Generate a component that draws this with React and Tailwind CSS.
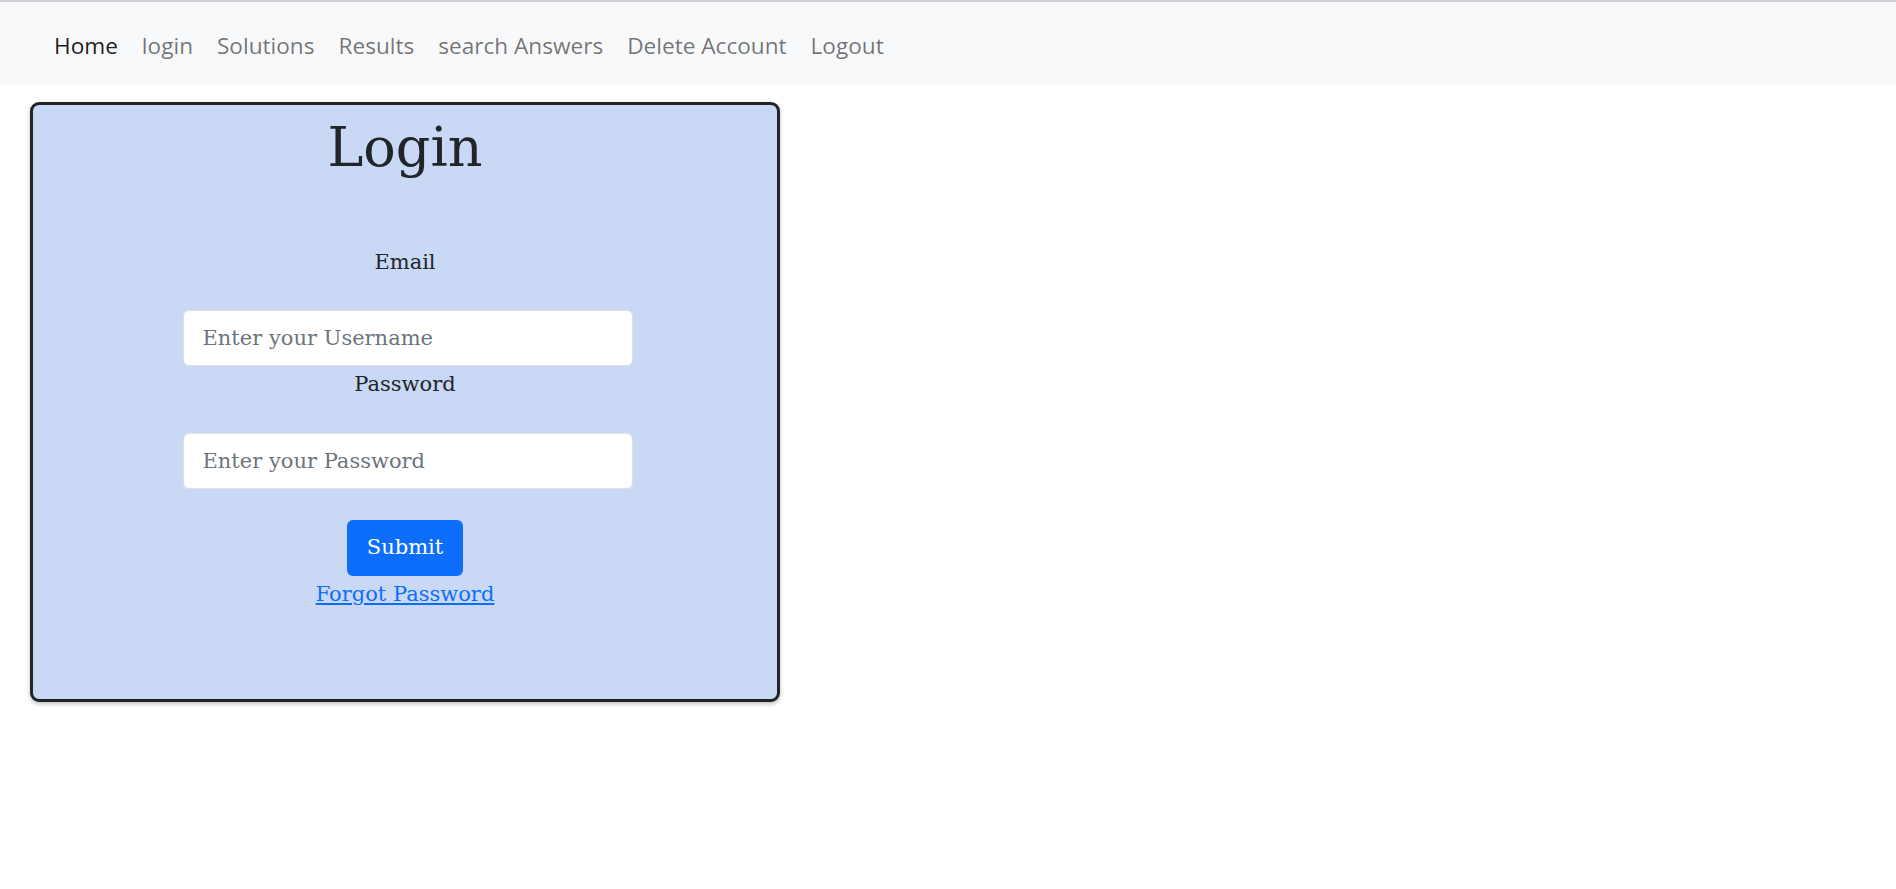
export default function App() {
  const serif = { fontFamily: '"DejaVu Serif", Georgia, serif' };
  const links = ["login", "Solutions", "Results", "search Answers", "Delete Account", "Logout"];
  return (
    <div className="min-h-screen bg-white">
      <nav className="border-t-2 border-[#cfd1d4] bg-[#f8f9fa] h-[85px] pt-[5px] flex items-center pl-[42px] font-['Open_Sans',sans-serif] text-[22.6px]">
        <a className="px-[12px] text-[rgba(0,0,0,0.9)]" href="#">Home</a>
        {links.map((l) => (
          <a key={l} className="px-[12px] text-[rgba(0,0,0,0.55)]" href="#">{l}</a>
        ))}
      </nav>
      <div
        className="ml-[30px] mt-[17px] w-[750px] h-[600px] border-[3px] border-[#212529] rounded-[9px] bg-[#c9d8f4] shadow-[0_2px_4px_rgba(0,0,0,0.25)] flex flex-col items-center text-[#212529]"
        style={serif}
      >
        <h1 className="text-[54px] leading-[70px] mt-[8px]">Login</h1>
        <div className="mt-[64px] text-[21px] leading-[30px]">Email</div>
        <input
          className="mt-[33px] ml-[5px] w-[450px] h-[56px] bg-white border border-[#dee2e6] rounded-[6px] px-[19px] text-[21px] placeholder:text-[#6c757d] outline-none"
          style={serif}
          placeholder="Enter your Username"
        />
        <div className="mt-[3px] text-[21px] leading-[30px]">Password</div>
        <input
          className="mt-[34px] ml-[5px] w-[450px] h-[56px] bg-white border border-[#dee2e6] rounded-[6px] px-[19px] text-[21px] placeholder:text-[#6c757d] outline-none"
          style={serif}
          type="password"
          placeholder="Enter your Password"
        />
        <button
          className="mt-[31px] w-[116px] h-[56px] bg-[#0d6efd] text-white rounded-[6px] text-[21px]"
          style={serif}
        >
          Submit
        </button>
        <a href="#" className="text-[#0d6efd] underline text-[21px] leading-[36px]">Forgot Password</a>
      </div>
    </div>
  );
}
